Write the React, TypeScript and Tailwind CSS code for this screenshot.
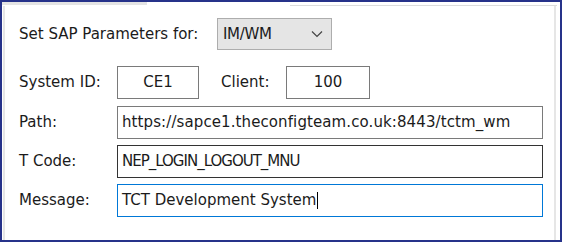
import React from "react";

// Chevron for the combo box
function Chevron() {
  return (
    <svg width="12" height="8" viewBox="0 0 12 8" className="text-[#444]">
      <path d="M1 1.5 L6 6.5 L11 1.5" fill="none" stroke="currentColor" strokeWidth="1.2" />
    </svg>
  );
}

function Field({ value, className = "", caret = false }: { value: string; className?: string; caret?: boolean }) {
  return (
    <div className={"h-[33px] border bg-white flex items-center px-[4px] " + className}>
      {value}
      {caret && <span className="w-px h-[17px] bg-black ml-px" />}
    </div>
  );
}

export default function App() {
  return (
    <div
      className="w-[562px] h-[242px] border-2 border-[#26328a] bg-white flex flex-col text-[15px] text-[#1b1b1b]"
      style={{ fontFamily: '"DejaVu Sans", sans-serif' }}
    >
      {/* tab strip edge */}
      <div className="flex h-[4px] shrink-0">
        <div className="w-[145px] h-[3px] bg-[#e4e4e4]" />
        <div className="w-[143px]" />
        <div className="w-[267px] border-b border-[#dcdcdc]" />
      </div>

      <div className="flex-1 ml-px mr-[4px] border-l-2 border-r-2 border-[#e6e6e6] pl-[14px] pr-[8px]">
        <div className="flex items-center h-[32px] mt-[12px]">
          <span className="w-[198px]">Set SAP Parameters for:</span>
          <div className="w-[115px] h-[32px] bg-[#e5e5e5] border border-[#adadad] flex items-center justify-between pl-[5px] pr-[8px]">
            <span className="tracking-[-0.3px]">IM/WM</span>
            <Chevron />
          </div>
        </div>

        <div className="flex items-center mt-[16px]">
          <span className="w-[98px]">System ID:</span>
          <Field value="CE1" className="w-[82px] justify-center border-[#7a7a7a]" />
          <span className="w-[87px] pl-[22px]">Client:</span>
          <Field value="100" className="w-[84px] justify-center border-[#7a7a7a]" />
        </div>

        <div className="flex items-center mt-[7px]">
          <span className="w-[98px]">Path:</span>
          <Field value="https://sapce1.theconfigteam.co.uk:8443/tctm_wm" className="w-[426px] h-[32px] border-[#7a7a7a] tracking-[0.1px]" />
        </div>

        <div className="flex items-center mt-[6px]">
          <span className="w-[98px]">T Code:</span>
          <Field value="NEP_LOGIN_LOGOUT_MNU" className="w-[426px] border-[#333333] tracking-[-1px]" />
        </div>

        <div className="flex items-center mt-[6px]">
          <span className="w-[98px]">Message:</span>
          <Field value="TCT Development System" caret className="w-[426px] border-[#0078d7]" />
        </div>
      </div>
    </div>
  );
}
